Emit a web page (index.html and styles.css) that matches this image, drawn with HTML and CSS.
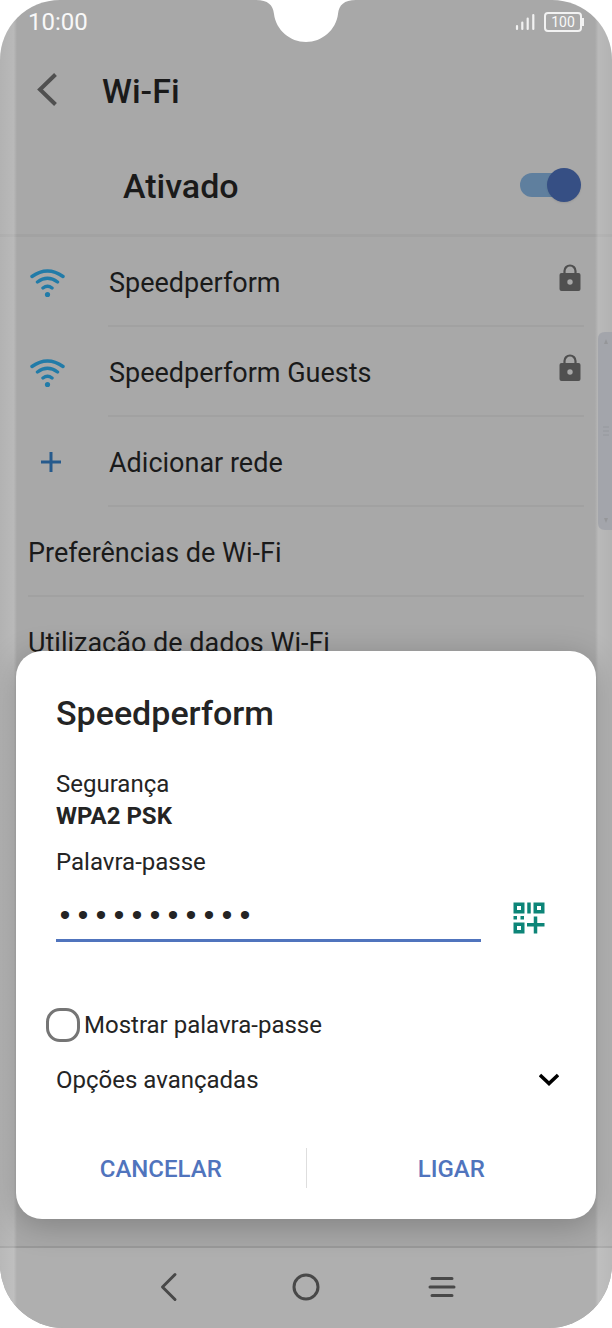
FILE: index.html
```html
<!DOCTYPE html>
<html lang="pt">
<head>
<meta charset="utf-8">
<meta name="viewport" content="width=device-width, initial-scale=1">
<title>Wi-Fi</title>
<link rel="stylesheet" href="styles.css">
</head>
<body>
<div class="phone">
  <div class="status">
    <span class="time">10:00</span>
    <div class="indicators">
      <svg class="signal" width="20" height="18" viewBox="0 0 20 18" stroke="#f2f2f2" stroke-width="2.200" stroke-linecap="round"><path d="M2 13v3M7.300 9.500V16M12.700 5.500V16M18.300 2V16"/></svg>
      <span class="battery">100</span>
    </div>
  </div>
  <svg class="notch" width="100" height="43" viewBox="0 0 100 43"><path fill="#fff" d="M0 0C12 0 17 5 18 14C20 30 34 42 50 42C66 42 80 30 82 14C83 5 88 0 100 0Z"/></svg>

  <header class="header">
    <button class="back" aria-label="Voltar"><svg width="22" height="36" viewBox="0 0 22 36" fill="none" stroke="#505050" stroke-width="4"><path d="M19.500 1.500L4 16.500L19.500 31.500"/></svg></button>
    <h1>Wi-Fi</h1>
  </header>
  <div class="enable">
    <label for="wifi">Ativado</label>
    <input class="switch" type="checkbox" role="switch" id="wifi" checked>
  </div>

  <main class="list">
    <div class="row inset">
      <svg class="lead" width="36" height="32" viewBox="0 0 36 32" fill="none" stroke="#217ba8" stroke-width="3.400" stroke-linecap="round"><path d="M2 10.500Q17.500-.5 33 10.500M7.500 16Q17.500 8.500 27.500 16M13 22Q17.500 18.500 22 22"/><circle cx="17.500" cy="28.500" r="2.600" fill="#217ba8" stroke="none"/></svg>
      <span class="name">Speedperform</span>
      <svg class="lock" width="22" height="28" viewBox="0 0 22 28"><path d="M5.500 11V7a5.500 5.500 0 0 1 11 0V11" fill="none" stroke="#505050" stroke-width="2.200"/><rect x=".5" y="9" width="21" height="18" rx="2" fill="#505050"/><circle cx="11" cy="18" r="2.700" fill="#a8a8a8"/></svg>
    </div>
    <div class="row inset">
      <svg class="lead" width="36" height="32" viewBox="0 0 36 32" fill="none" stroke="#217ba8" stroke-width="3.400" stroke-linecap="round"><path d="M2 10.500Q17.500-.5 33 10.500M7.500 16Q17.500 8.500 27.500 16M13 22Q17.500 18.500 22 22"/><circle cx="17.500" cy="28.500" r="2.600" fill="#217ba8" stroke="none"/></svg>
      <span class="name">Speedperform Guests</span>
      <svg class="lock" width="22" height="28" viewBox="0 0 22 28"><path d="M5.500 11V7a5.500 5.500 0 0 1 11 0V11" fill="none" stroke="#505050" stroke-width="2.200"/><rect x=".5" y="9" width="21" height="18" rx="2" fill="#505050"/><circle cx="11" cy="18" r="2.700" fill="#a8a8a8"/></svg>
    </div>
    <div class="row inset">
      <svg class="lead" width="36" height="32" viewBox="0 0 36 32" stroke="#265a8c" stroke-width="3"><path d="M11 16H31M21 6V26"/></svg>
      <span class="name">Adicionar rede</span>
    </div>
    <div class="row"><span class="name">Preferências de Wi-Fi</span></div>
    <div class="row last"><span class="name">Utilização de dados Wi-Fi</span></div>
  </main>

  <nav class="nav">
    <button aria-label="Voltar"><svg width="30" height="30" viewBox="0 0 30 30" fill="none" stroke="#484848" stroke-width="3" stroke-linecap="round" stroke-linejoin="round"><path d="M20 2.500L7.500 15L20 27.500"/></svg></button>
    <button aria-label="Início"><svg width="30" height="30" viewBox="0 0 30 30" fill="none" stroke="#484848" stroke-width="3"><circle cx="15" cy="15" r="12"/></svg></button>
    <button aria-label="Recentes"><svg width="30" height="30" viewBox="0 0 30 30" fill="none" stroke="#484848" stroke-width="3" stroke-linecap="round"><path d="M5 6.500H25M3 15H27M5 23.500H25"/></svg></button>
  </nav>

  <div class="edge left"></div>
  <div class="edge right"></div>
  <svg class="handle" width="14" height="198" viewBox="0 0 14 198"><path d="M14 0H7Q0 0 0 7V191Q0 198 7 198H14Z" fill="#a3a5ab"/><path d="M6 12L8 7L10 12ZM6 186L8 191L10 186Z" fill="#959699"/><path d="M5 95H11M5 99H11M5 103H11" stroke="#95989d"/></svg>

  <form class="dialog" role="dialog" aria-labelledby="dialog-title">
    <h2 id="dialog-title">Speedperform</h2>
    <div class="security">Segurança<br><strong>WPA2 PSK</strong></div>
    <label class="password-label" for="password">Palavra-passe</label>
    <div class="password-row">
      <input class="password" id="password" type="password" value="speedguests" autocomplete="off">
      <button class="qr" type="button" aria-label="Ler código QR"><svg width="32" height="32" viewBox="0 0 32 32" fill="none" stroke="#0d8578" stroke-width="3.500"><path d="M2.250 2.250h7.500v7.500h-7.500zM22.250 2.250h7.500v7.500h-7.500zM2.250 22.250h7.500v7.500h-7.500zM16 .5V11.500M.5 15.750h3.500M7.500 15.750h3.500M22.500 14.500V31.500M14 22.750H31.500"/></svg></button>
    </div>
    <label class="show"><input type="checkbox">Mostrar palavra-passe</label>
    <button class="advanced" type="button">Opções avançadas<svg width="20" height="14" viewBox="0 0 20 14" fill="none" stroke="#000" stroke-width="3.500"><path d="M1 2L10 10.500L19 2"/></svg></button>
    <div class="actions">
      <button type="button">CANCELAR</button>
      <button type="button">LIGAR</button>
    </div>
  </form>
</div>
</body>
</html>
```
FILE: styles.css
```css
* { box-sizing: border-box; }
body {
  margin: 0;
  background: #fff;
  color: #1a1a1a;
  font-family: Roboto, "Liberation Sans", sans-serif;
  font-size: 24px;
  line-height: 32px;
}
button {
  padding: 0;
  border: 0;
  background: none;
  color: inherit;
  font: inherit;
}
svg { display: block; flex: none; }
h1, h2 { margin: 0; font-size: 34px; font-weight: 500; line-height: 40px; }

.phone {
  position: relative;
  display: flex;
  flex-direction: column;
  min-height: 100vh;
  overflow: hidden;
  border-radius: 60px 60px 64px 64px;
  background: #a8a8a8;
}
.status {
  display: flex;
  justify-content: space-between;
  align-items: center;
  height: 44px;
  padding: 0 28px;
  color: #f8f8f8;
}
.indicators { display: flex; align-items: center; gap: 9px; }
.battery {
  position: relative;
  width: 38px;
  height: 20px;
  margin-right: 2px;
  border: 2px solid #f2f2f2;
  border-radius: 4px;
  font-size: 14px;
  line-height: 16px;
  text-align: center;
}
.battery::after {
  content: "";
  position: absolute;
  top: 4px;
  right: -4px;
  width: 2px;
  height: 8px;
  background: #f2f2f2;
}
.notch { position: absolute; top: 0; left: 50%; transform: translateX(-50%); }

.header {
  display: flex;
  align-items: center;
  gap: 44px;
  height: 94px;
  padding: 0 36px;
}
.enable {
  display: flex;
  align-items: center;
  justify-content: space-between;
  height: 99px;
  padding: 0 31px 2px 123px;
  border-bottom: 3px solid #a2a2a2;
  font-size: 34px;
  font-weight: 500;
}
.enable label { padding-top: 2px; }
.switch {
  appearance: none;
  position: relative;
  width: 61px;
  height: 34px;
  margin: 0;
}
.switch::before {
  content: "";
  position: absolute;
  top: 5px;
  left: 0;
  width: 52px;
  height: 24px;
  border-radius: 12px;
  background: #5f7f9e;
}
.switch::after {
  content: "";
  position: absolute;
  top: 0;
  right: 0;
  width: 34px;
  height: 34px;
  border-radius: 50%;
  background: #364f84;
  box-shadow: 0 1px 2px rgba(0, 0, 0, .1);
}

.list { flex: 1; padding: 0 28px; }
.row {
  position: relative;
  display: flex;
  align-items: center;
  height: 90px;
  font-size: 27px;
}
.row::after {
  content: "";
  position: absolute;
  right: 0;
  bottom: 0;
  left: 0;
  height: 2px;
  background: #a1a1a1;
}
.inset::after { left: 80px; }
.last::after { display: none; }
.name { flex: 1; padding-top: 1px; }
.lead { margin-right: 43px; margin-left: 2px; }
.lock { margin: 0 3px 8px 0; }

.nav {
  display: flex;
  justify-content: center;
  gap: 106px;
  height: 82px;
  padding-bottom: 2px;
  border-top: 2px solid #999;
  background: #afafaf;
}

.edge {
  position: absolute;
  top: 0;
  bottom: 0;
  width: 17px;
  background: linear-gradient(90deg, rgba(255, 255, 255, .12), rgba(255, 255, 255, .2) 80%, rgba(255, 255, 255, 0));
}
.left { left: 0; }
.right { right: 0; transform: scaleX(-1); }
.handle { position: absolute; top: 332px; right: 0; }

.dialog {
  position: absolute;
  right: 16px;
  bottom: 109px;
  left: 16px;
  padding: 42px 0 31px;
  border-radius: 26px;
  background: #fff;
  box-shadow: 0 6px 32px rgba(0, 0, 0, .24);
  color: #242424;
}
.dialog h2, .security { padding: 0 40px; }
.security { margin-top: 35px; }
.password-label { display: block; margin: 14px 40px 12px; }
.password-row { display: flex; align-items: center; gap: 32px; padding: 0 51px 0 40px; }
.password {
  flex: 1;
  min-width: 0;
  height: 52px;
  padding: 4px 0 0;
  border: 0;
  border-bottom: 3px solid #5074bd;
  outline: 0;
  background: none;
  color: #242424;
  font-family: "Liberation Mono", monospace;
  font-size: 30px;
}
.qr { padding-top: 4px; }
.show { display: flex; align-items: center; gap: 4px; margin: 66px 30px 18px; }
.show input {
  appearance: none;
  width: 34px;
  height: 34px;
  margin: 0;
  border: 3px solid #757575;
  border-radius: 14px;
}
.advanced {
  display: flex;
  align-items: center;
  justify-content: space-between;
  width: 100%;
  height: 40px;
  padding: 0 37px 0 40px;
}
.actions { display: flex; margin-top: 48px; }
.actions button { flex: 1; height: 40px; padding-top: 2px; color: #5074bd; font-weight: 500; }
.actions button + button { border-left: 1px solid #dedede; }
```
